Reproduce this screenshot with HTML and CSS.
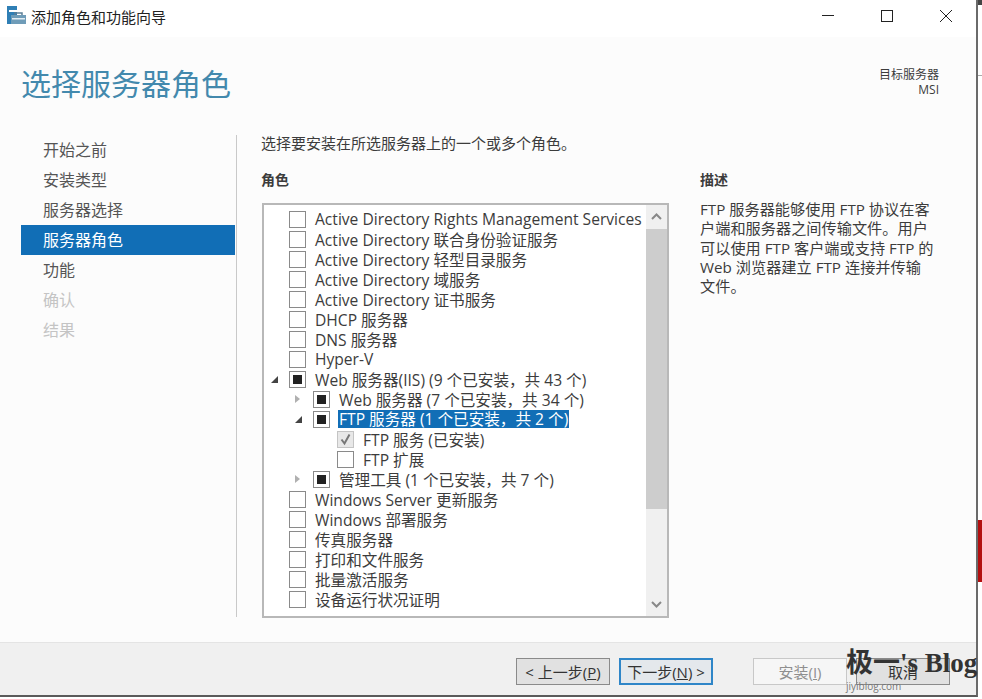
FILE: index.html
```html
<!DOCTYPE html>
<html lang="zh-CN">
<head>
  <meta charset="UTF-8" />
  <title>添加角色和功能向导</title>
  <link rel="stylesheet" href="styles.css">
</head>
<body>
  <div class="desktop">
    <div class="window">
      <div class="titlebar">
        <svg class="app-icon" width="20" height="20" viewBox="0 0 20 20">
          <rect x="0" y="0" width="10" height="18" fill="#2f7fb5"/>
          <rect x="2" y="4" width="8" height="2" fill="#fff"/>
          <rect x="4" y="9" width="15" height="9" fill="#6f9cb8"/>
          <path d="M8 9V7h7v2" fill="none" stroke="#5c7f96" stroke-width="1.5"/>
          <rect x="5" y="12" width="13" height="1.5" fill="#e3edf3"/>
        </svg>
        <span class="title-text">添加角色和功能向导</span>
        <div class="window-btns">
          <svg width="14" height="14" viewBox="0 0 14 14"><path d="M1 6.500h12" stroke="#222" fill="none"/></svg>
          <svg width="14" height="14" viewBox="0 0 14 14"><rect x="1.500" y="1.500" width="11" height="11" stroke="#222" fill="none"/></svg>
          <svg width="14" height="14" viewBox="0 0 14 14"><path d="M1 1l12 12M13 1L1 13" stroke="#222" fill="none"/></svg>
        </div>
      </div>

      <div class="head">
        <h1>选择服务器角色</h1>
        <div class="target">
          <div class="target-label">目标服务器</div>
          <div>MSI</div>
        </div>
      </div>

      <div class="body">
        <nav class="steps">
          <div class="step">开始之前</div>
          <div class="step">安装类型</div>
          <div class="step">服务器选择</div>
          <div class="step active">服务器角色</div>
          <div class="step">功能</div>
          <div class="step off">确认</div>
          <div class="step off">结果</div>
        </nav>

        <main class="main">
          <p class="intro">选择要安装在所选服务器上的一个或多个角色。</p>
          <div class="columns">
            <section class="roles">
              <h2>角色</h2>
              <div class="listbox">
                <div class="rows">
                  <div class="row"><i class="arrow"></i><i class="box"></i><span>Active Directory Rights Management Services</span></div>
                  <div class="row"><i class="arrow"></i><i class="box"></i><span>Active Directory 联合身份验证服务</span></div>
                  <div class="row"><i class="arrow"></i><i class="box"></i><span>Active Directory 轻型目录服务</span></div>
                  <div class="row"><i class="arrow"></i><i class="box"></i><span>Active Directory 域服务</span></div>
                  <div class="row"><i class="arrow"></i><i class="box"></i><span>Active Directory 证书服务</span></div>
                  <div class="row"><i class="arrow"></i><i class="box"></i><span>DHCP 服务器</span></div>
                  <div class="row"><i class="arrow"></i><i class="box"></i><span>DNS 服务器</span></div>
                  <div class="row"><i class="arrow"></i><i class="box"></i><span>Hyper-V</span></div>
                  <div class="row"><i class="arrow open"></i><i class="box part"></i><span>Web 服务器(IIS) (9 个已安装，共 43 个)</span></div>
                  <div class="row lvl1"><i class="arrow closed"></i><i class="box part"></i><span>Web 服务器 (7 个已安装，共 34 个)</span></div>
                  <div class="row lvl1"><i class="arrow open"></i><i class="box part"></i><span class="selected">FTP 服务器 (1 个已安装，共 2 个)</span></div>
                  <div class="row lvl2"><i class="box checked">
                    <svg width="13" height="13" viewBox="0 0 13 13"><path d="M2.500 6.500l3 4 5-9" fill="none" stroke="#777" stroke-width="2"/></svg>
                  </i><span>FTP 服务 (已安装)</span></div>
                  <div class="row lvl2"><i class="box"></i><span>FTP 扩展</span></div>
                  <div class="row lvl1"><i class="arrow closed"></i><i class="box part"></i><span>管理工具 (1 个已安装，共 7 个)</span></div>
                  <div class="row"><i class="arrow"></i><i class="box"></i><span>Windows Server 更新服务</span></div>
                  <div class="row"><i class="arrow"></i><i class="box"></i><span>Windows 部署服务</span></div>
                  <div class="row"><i class="arrow"></i><i class="box"></i><span>传真服务器</span></div>
                  <div class="row"><i class="arrow"></i><i class="box"></i><span>打印和文件服务</span></div>
                  <div class="row"><i class="arrow"></i><i class="box"></i><span>批量激活服务</span></div>
                  <div class="row"><i class="arrow"></i><i class="box"></i><span>设备运行状况证明</span></div>
                </div>
                <div class="scrollbar">
                  <svg class="sb-btn" width="21" height="24" viewBox="0 0 21 24"><path d="M6 14l4.500-4.500L15 14" fill="none" stroke="#888" stroke-width="2"/></svg>
                  <div class="thumb"></div>
                  <div class="track"></div>
                  <svg class="sb-btn" width="21" height="24" viewBox="0 0 21 24"><path d="M6 10l4.500 4.500L15 10" fill="none" stroke="#888" stroke-width="2"/></svg>
                </div>
              </div>
            </section>
            <section class="desc">
              <h2>描述</h2>
              <p>FTP 服务器能够使用 FTP 协议在客户端和服务器之间传输文件。用户可以使用 FTP 客户端或支持 FTP 的 Web 浏览器建立 FTP 连接并传输文件。</p>
            </section>
          </div>
        </main>
      </div>

      <footer class="footer">
        <button class="btn">&lt; 上一步(<u>P</u>)</button>
        <button class="btn primary">下一步(<u>N</u>) &gt;</button>
        <button class="btn disabled">安装(<u>I</u>)</button>
        <button class="btn">取消</button>
      </footer>
    </div>
    <div class="outside">
      <div class="outside-top"></div>
      <div class="outside-line"></div>
      <div class="outside-red"></div>
    </div>
  </div>
  <div class="watermark">
    <div class="wm-main">极一's Blog</div>
    <div class="wm-sub">jiyiblog.com</div>
  </div>
</body>
</html>
```

FILE: styles.css
```css
html, body {
  margin: 0;
  padding: 0;
  height: 699px;
  overflow: hidden;
  background: #fff;
}
body {
  font-family: "Open Sans", "Noto Sans CJK SC", sans-serif;
  font-size: 15px;
  color: #3c3c3c;
  position: relative;
}
.desktop { display: flex; height: 699px; }
.window {
  width: 978px;
  height: 697px;
  flex: none;
  display: flex;
  flex-direction: column;
  background: #fcfcfc;
  border-right: 2px solid #6a6a6a;
  border-bottom: 2px solid #5a5a5a;
  box-sizing: border-box;
}
.titlebar {
  height: 37px;
  flex: none;
  display: flex;
  align-items: center;
  padding-left: 7px;
  background: #fff;
  color: #222;
}
.app-icon { margin-top: -5px; }
.title-text { margin-left: 4px; font-size: 15px; margin-top: -5px; }
.window-btns {
  margin-left: auto;
  margin-right: 23px;
  display: flex;
  gap: 45px;
  margin-top: -5px;
}
.head {
  height: 98px;
  flex: none;
  display: flex;
  justify-content: space-between;
}
h1 {
  margin: 25px 0 0 21px;
  font-size: 30px;
  font-weight: 400;
  line-height: 44px;
  color: #4389ad;
}
.target {
  margin: 30px 37px 0 0;
  text-align: right;
  font-size: 12px;
  line-height: 15px;
}
.body { height: 507px; flex: none; display: flex; }
.steps {
  width: 214px;
  margin-left: 21px;
  flex: none;
}
.step {
  height: 30px;
  line-height: 30px;
  padding-left: 22px;
  font-size: 16px;
  color: #555;
}
.step.active { background: #116eb6; color: #fff; }
.step.off { color: #c4c4c4; }
.main {
  margin-left: 1px;
  width: 700px;
  height: 482px;
  border-left: 1px solid #c9c9c9;
  padding-left: 24px;
}
.intro { margin: 0; font-size: 15px; line-height: 16px; }
.columns { display: flex; margin-top: 19px; }
h2 {
  margin: 0;
  font-size: 14px;
  font-weight: 700;
  line-height: 20px;
}
.roles { width: 408px; flex: none; }
.listbox {
  margin: 13px 0 0 1px;
  width: 407px;
  height: 415px;
  box-sizing: border-box;
  border: 2px solid #b8b8b8;
  background: #fff;
  display: flex;
}
.rows { flex: 1; padding-top: 4px; min-width: 0; overflow: hidden; }
.row {
  height: 20px;
  display: flex;
  align-items: center;
  white-space: nowrap;
  font-size: 15.6px;
  color: #3c3c3c;
  padding-left: 6px;
}
.row.lvl1 { padding-left: 30px; }
.row.lvl2 { padding-left: 73px; }
.arrow { width: 19px; height: 20px; flex: none; position: relative; }
.arrow.open::before {
  content: "";
  position: absolute;
  left: 1px;
  top: 7px;
  border-style: solid;
  border-width: 0 0 7px 7px;
  border-color: transparent transparent #444 transparent;
}
.arrow.closed::before {
  content: "";
  position: absolute;
  left: 1px;
  top: 6px;
  border-style: solid;
  border-width: 4px 0 4px 5px;
  border-color: transparent transparent transparent #b0b0b0;
}
.box {
  width: 17px;
  height: 17px;
  box-sizing: border-box;
  border: 1px solid #8a8a8a;
  background: #fff;
  flex: none;
  margin-right: 9px;
  display: flex;
  align-items: center;
  justify-content: center;
}
.box.part::before { content: ""; width: 9px; height: 9px; background: #222; }
.box.checked { background: #e8e8e8; border-color: #c4c4c4; }
.selected {
  background: #116eb6;
  color: #fff;
  padding: 0 1px;
  margin-left: -1px;
  line-height: 18px;
}
.scrollbar {
  width: 21px;
  flex: none;
  display: flex;
  flex-direction: column;
  background: #f0f0f0;
}
.sb-btn { flex: none; display: block; }
.thumb { height: 280px; flex: none; background: #cdcdcd; }
.track { flex: 1; }
.desc { margin-left: 31px; width: 236px; }
.desc p { margin: 10px 0 0; font-size: 15.2px; line-height: 19.25px; }
.footer {
  flex: 1;
  background: #f0f0f0;
  border-top: 1px solid #e4e4e4;
  display: flex;
  align-items: flex-start;
  padding: 15px 0 0 516px;
}
.btn {
  width: 94px;
  height: 27px;
  padding: 0;
  box-sizing: border-box;
  font: inherit;
  font-size: 15px;
  color: #333;
  background: #e1e1e1;
  border: 1px solid #8a8a8a;
  margin-right: 9px;
}
.btn.primary { border: 2px solid #2f86c8; background: #e4e8ec; margin-right: 40px; }
.btn.disabled { background: #f6f6f6; color: #8f8f8f; border-color: #c8c8c8; }
.outside { flex: 1; position: relative; }
.outside-top { height: 5px; background: #444; }
.outside-line { margin-top: 70px; height: 1px; background: #aaa; }
.outside-red { margin-top: 444px; height: 62px; background: #b30f0f; }
.watermark { position: absolute; left: 846px; top: 646px; color: #333; }
.wm-main {
  font-family: "Liberation Serif", "Noto Sans CJK SC", serif;
  font-size: 27px;
  font-weight: 700;
  line-height: 34px;
  white-space: nowrap;
}
.wm-sub { font-size: 10px; line-height: 12px; color: #777; }
```
